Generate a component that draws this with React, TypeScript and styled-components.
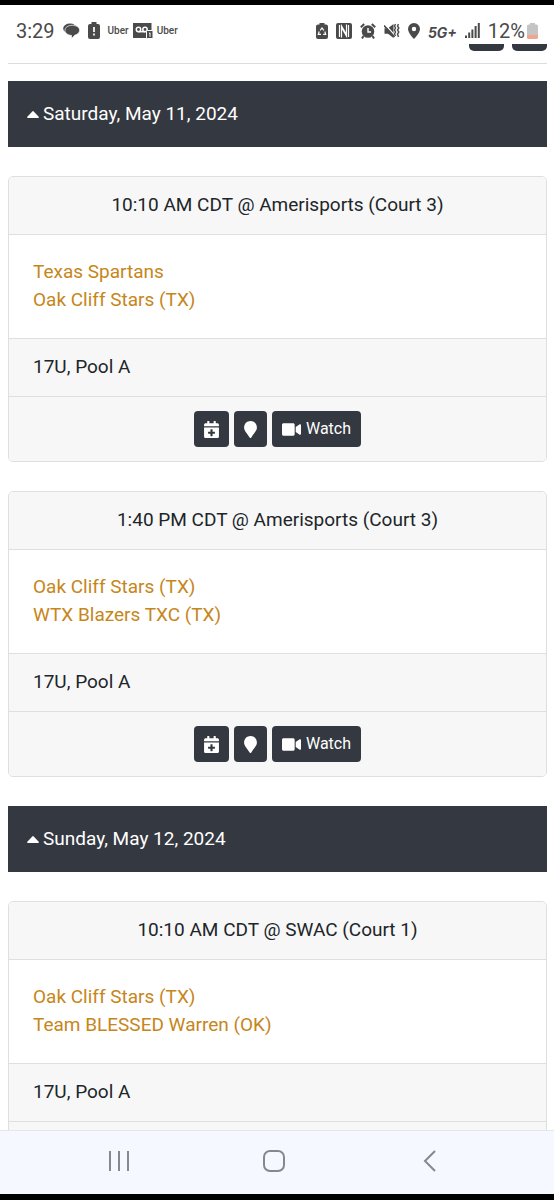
import React from 'react';
import styled, { createGlobalStyle } from 'styled-components';
import { FaCalendarPlus, FaMapMarker, FaVideo } from 'react-icons/fa';

const GlobalStyle = createGlobalStyle`
  * { box-sizing: border-box; }
  body {
    margin: 0;
    background: #fff;
    color: #212529;
    font-family: Roboto, "Liberation Sans", sans-serif;
    font-size: 19px;
    line-height: 28px;
  }
`;

const dark = '#343840';
const line = '#dfdfdf';

const Screen = styled.div`
  display: flex;
  flex-direction: column;
  height: 100vh;
  border-top: 5px solid #000;
  border-bottom: 6px solid #000;
  background: #fff;
`;

const StatusBar = styled.header`
  flex: none;
  display: flex;
  justify-content: space-between;
  align-items: center;
  height: 39px;
  padding: 12px 16px 0 16px;
  color: #4a4a4a;
`;

const StatusGroup = styled.div<{ $gap: number }>`
  display: flex;
  align-items: center;
  gap: ${(p) => p.$gap}px;
  svg { display: block; flex: none; }
`;

const Clock = styled.time`
  font-size: 20px;
  line-height: 24px;
`;

const Notice = styled.span`
  font-size: 10px;
  font-weight: 500;
  line-height: 14px;
`;

const Network = styled.span`
  font-family: Inter, Roboto, sans-serif;
  font-size: 14px;
  font-weight: 700;
  font-style: italic;
  line-height: 20px;
  padding-top: 4px;
`;

const Level = styled.span`
  font-size: 20px;
  line-height: 24px;
`;

const Content = styled.main`
  flex: 1;
  min-height: 0;
  overflow: hidden;
  padding: 0 7px 0 8px;
`;

const Toolbar = styled.div`
  display: flex;
  justify-content: flex-end;
  gap: 8px;
  height: 20px;
  border-bottom: 1px solid #dcdcdc;
`;

const ToolbarButton = styled.button`
  width: 35px;
  height: 7px;
  padding: 0;
  border: 0;
  border-radius: 0 0 5px 5px;
  background: ${dark};
`;

const Day = styled.section`
  padding-top: 17px;
  & + & { padding-top: 29px; }
`;

const DayButton = styled.button`
  display: flex;
  align-items: center;
  gap: 4px;
  width: 100%;
  height: 66px;
  padding: 0 19px;
  border: 0;
  background: ${dark};
  color: #fff;
  font: inherit;
`;

const Card = styled.article`
  margin-top: 29px;
  border: 1px solid ${line};
  border-radius: 5px;
  background: #fff;
  overflow: hidden;
`;

const CardHeader = styled.h2`
  margin: 0;
  padding: 14px 24px 15px;
  border-bottom: 1px solid ${line};
  background: #f7f7f7;
  font: inherit;
  text-align: center;
`;

const Teams = styled.div`
  display: flex;
  flex-direction: column;
  align-items: flex-start;
  padding: 23px 24px 24px;
`;

const TeamLink = styled.a`
  color: #c6861a;
  text-decoration: none;
`;

const Division = styled.div`
  padding: 14px 24px 15px;
  border-top: 1px solid ${line};
  background: #f7f7f7;
`;

const Actions = styled.div`
  display: flex;
  justify-content: center;
  gap: 5px;
  min-height: 65px;
  padding: 14px 24px;
  border-top: 1px solid ${line};
  background: #f7f7f7;
`;

const ActionButton = styled.button<{ $icon: number }>`
  display: flex;
  align-items: center;
  gap: 5px;
  height: 36px;
  padding: 0 10px;
  border: 0;
  border-radius: 4px;
  background: ${dark};
  color: #fff;
  font: inherit;
  font-size: 16px;
  svg {
    width: ${(p) => p.$icon}px;
    height: 17px;
  }
`;

const NavBar = styled.nav`
  flex: none;
  display: flex;
  justify-content: space-between;
  align-items: center;
  height: 64px;
  padding: 0 107px 4px 101px;
  border-top: 1px solid #e3e6ea;
  background: #f5f9ff;
`;

const NavButton = styled.button`
  display: flex;
  justify-content: center;
  width: 36px;
  padding: 0;
  border: 0;
  background: none;
  color: #85888c;
`;

const ChatIcon = () => (
  <svg width="17" height="16" viewBox="0 0 17 16">
    <ellipse cx="7" cy="5.500" rx="6.800" ry="5" fill="currentColor" />
    <path
      d="M9.300 2.300c4.200 0 7.300 2 7.300 5 0 2.400-1.900 4.200-4.600 4.800L8.500 15.600v-3.200C4.800 12.200 2 10.200 2 7.300c0-3 3.100-5 7.300-5z"
      fill="currentColor"
      stroke="#fff"
      strokeWidth=".7"
    />
  </svg>
);

const BatteryAlertIcon = () => (
  <svg width="12" height="17" viewBox="0 0 12 17" fill="currentColor">
    <path d="M3.500 0h5v2H10a2 2 0 0 1 2 2v11a2 2 0 0 1-2 2H2a2 2 0 0 1-2-2V4a2 2 0 0 1 2-2h1.500z" />
    <path d="M6 5v5M6 11.500v2" stroke="#fff" strokeWidth="1.700" />
  </svg>
);

const VoicemailIcon = () => (
  <svg width="20" height="17" viewBox="0 0 20 17" fill="none">
    <path d="M0 1h18.500v8H13v7H0z" fill="currentColor" />
    <g stroke="#fff" strokeWidth="1.500">
      <circle cx="5.500" cy="7.500" r="2.200" />
      <circle cx="12" cy="7.500" r="2.200" />
      <path d="M5.500 9.700H12" />
    </g>
    <rect x="13.500" y="8.500" width="6.500" height="8" rx="1" fill="currentColor" stroke="#fff" />
    <path d="M16 11.500l1-.7v4" stroke="#fff" strokeWidth="1" />
  </svg>
);

const BatterySaverIcon = () => (
  <svg width="12" height="16" viewBox="0 0 12 16" fill="currentColor">
    <path d="M3.500 0h5v1.500H10a2 2 0 0 1 2 2V14a2 2 0 0 1-2 2H2a2 2 0 0 1-2-2V3.500a2 2 0 0 1 2-2h1.500z" />
    <path d="M4.200 7.300L6 4.900l1.800 2.400M8.800 8.500l.9 2.900H7.200M5 11.400H2.300l.9-2.900" fill="none" stroke="#fff" strokeWidth="1.200" />
  </svg>
);

const NfcIcon = () => (
  <svg width="16" height="16" viewBox="0 0 16 16">
    <rect width="16" height="16" rx="2" fill="currentColor" />
    <path d="M3.500 14V2M12.500 2v12" fill="none" stroke="#fff" strokeWidth="1.200" />
    <path d="M5.500 14.500V3l5 8.500M10.500 1.500V13L5.500 4.500" fill="none" stroke="#fff" strokeWidth="1.200" />
  </svg>
);

const AlarmIcon = () => (
  <svg width="16" height="16" viewBox="0 0 16 16" fill="none" stroke="currentColor">
    <circle cx="8" cy="8.500" r="6.300" fill="currentColor" stroke="none" />
    <path d="M.8 4.200l3.400-3.200M15.200 4.200L11.800 1M3.500 13L2 15.500M12.500 13l1.500 2.500" strokeWidth="2" />
    <path d="M8 5v4h3" stroke="#fff" strokeWidth="1.400" />
  </svg>
);

const MuteIcon = () => (
  <svg width="16" height="16" viewBox="0 0 16 16" fill="none">
    <path d="M.5 5.200h3.500L9.500 1v14L4 10.800H.5z" fill="currentColor" />
    <path d="M1 1.500l10 11" stroke="#fff" strokeWidth="1.200" />
    <path d="M0 2.500l10.500 11.500" stroke="currentColor" strokeWidth="1.700" />
    <path d="M11.500 1l-1 2 1 2-1 2 1 2-1 2 1 2M14.500 1l-1 2 1.300 2-1.300 2 1.300 2-1.300 2 1 3" stroke="currentColor" strokeWidth="1.400" />
  </svg>
);

const PlaceIcon = () => (
  <svg width="12" height="16" viewBox="0 0 12 16" fill="currentColor" fillRule="evenodd">
    <path d="M6 0a6 6 0 0 1 6 6c0 4-6 10-6 10S0 10 0 6a6 6 0 0 1 6-6zm0 3.800a2.200 2.200 0 1 0 0 4.400 2.200 2.200 0 0 0 0-4.400z" />
  </svg>
);

const SignalIcon = () => (
  <svg width="15" height="15" viewBox="0 0 15 15" fill="currentColor">
    <path d="M0 12.500h2V15H0zM3.200 9.500h2V15h-2zM6.400 6.500h2V15h-2zM9.600 3h2v12h-2zM12.800 0h2v15h-2z" />
  </svg>
);

const BatteryIcon = () => (
  <svg width="11" height="16" viewBox="0 0 11 16">
    <path d="M3 0h5v1.500h1.500A1.500 1.500 0 0 1 11 3v9H0V3a1.500 1.500 0 0 1 1.500-1.500H3z" fill="#c4c4c4" />
    <path d="M0 12h11v2.500A1.500 1.500 0 0 1 9.500 16h-8A1.500 1.500 0 0 1 0 14.500z" fill="#f3a58c" />
  </svg>
);

const CaretUpIcon = () => (
  <svg width="12" height="7" viewBox="0 0 12 7" fill="currentColor">
    <path d="M5.300.4a1 1 0 0 1 1.400 0L11.700 5.700c.4.500.1 1.300-.5 1.300H.8C.2 7-.1 6.200.3 5.700z" />
  </svg>
);

interface Game {
  title: string;
  teams: string[];
  division: string;
  watchable: boolean;
}

const days: { date: string; games: Game[] }[] = [
  {
    date: 'Saturday, May 11, 2024',
    games: [
      {
        title: '10:10 AM CDT @ Amerisports (Court 3)',
        teams: ['Texas Spartans', 'Oak Cliff Stars (TX)'],
        division: '17U, Pool A',
        watchable: true,
      },
      {
        title: '1:40 PM CDT @ Amerisports (Court 3)',
        teams: ['Oak Cliff Stars (TX)', 'WTX Blazers TXC (TX)'],
        division: '17U, Pool A',
        watchable: true,
      },
    ],
  },
  {
    date: 'Sunday, May 12, 2024',
    games: [
      {
        title: '10:10 AM CDT @ SWAC (Court 1)',
        teams: ['Oak Cliff Stars (TX)', 'Team BLESSED Warren (OK)'],
        division: '17U, Pool A',
        watchable: false,
      },
    ],
  },
];

const GameCard = ({ game }: { game: Game }) => (
  <Card>
    <CardHeader>{game.title}</CardHeader>
    <Teams>
      {game.teams.map((team) => (
        <TeamLink key={team} href="#">{team}</TeamLink>
      ))}
    </Teams>
    <Division>{game.division}</Division>
    <Actions>
      <ActionButton $icon={15} aria-label="Add to calendar"><FaCalendarPlus /></ActionButton>
      <ActionButton $icon={13} aria-label="Map"><FaMapMarker /></ActionButton>
      {game.watchable && <ActionButton $icon={19}><FaVideo />Watch</ActionButton>}
    </Actions>
  </Card>
);

export default function App() {
  return (
    <>
      <GlobalStyle />
      <Screen>
        <StatusBar>
          <StatusGroup $gap={8}>
            <Clock>3:29</Clock>
            <ChatIcon />
            <BatteryAlertIcon />
            <StatusGroup $gap={4}>
              <Notice>Uber</Notice>
              <VoicemailIcon />
              <Notice>Uber</Notice>
            </StatusGroup>
          </StatusGroup>
          <StatusGroup $gap={8}>
            <BatterySaverIcon />
            <NfcIcon />
            <AlarmIcon />
            <MuteIcon />
            <PlaceIcon />
            <Network>5G+</Network>
            <SignalIcon />
            <StatusGroup $gap={2}>
              <Level>12%</Level>
              <BatteryIcon />
            </StatusGroup>
          </StatusGroup>
        </StatusBar>
        <Content>
          <Toolbar>
            <ToolbarButton aria-label="Share" />
            <ToolbarButton aria-label="Print" />
          </Toolbar>
          {days.map((day) => (
            <Day key={day.date}>
              <DayButton aria-expanded="true"><CaretUpIcon />{day.date}</DayButton>
              {day.games.map((game) => (
                <GameCard key={game.title} game={game} />
              ))}
            </Day>
          ))}
        </Content>
        <NavBar>
          <NavButton aria-label="Recent apps">
            <svg width="20" height="20" viewBox="0 0 20 20" stroke="currentColor" strokeWidth="2">
              <path d="M1 0v20M10 0v20M19 0v20" />
            </svg>
          </NavButton>
          <NavButton aria-label="Home">
            <svg width="22" height="22" viewBox="0 0 22 22" fill="none" stroke="currentColor" strokeWidth="2">
              <rect x="1" y="1" width="20" height="20" rx="6" />
            </svg>
          </NavButton>
          <NavButton aria-label="Back">
            <svg width="13" height="22" viewBox="0 0 13 22" fill="none" stroke="currentColor" strokeWidth="2">
              <path d="M12 1L2 11l10 10" />
            </svg>
          </NavButton>
        </NavBar>
      </Screen>
    </>
  );
}
